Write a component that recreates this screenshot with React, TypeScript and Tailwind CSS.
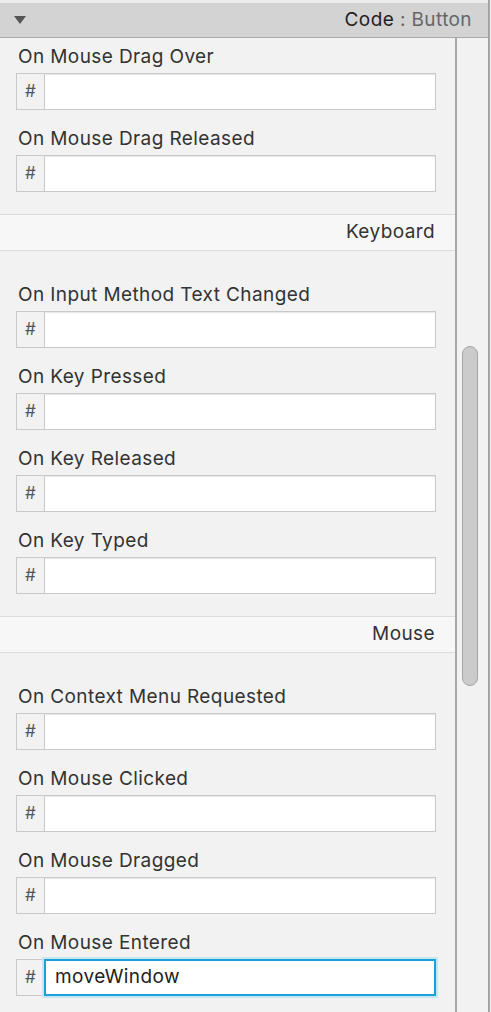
const font = { fontFamily: 'Inter, "Open Sans", "Liberation Sans", sans-serif', letterSpacing: "0.4px" };

type Field = { label: string; value?: string; focused?: boolean };

const groups: { title?: string; fields: Field[] }[] = [
  {
    fields: [{ label: "On Mouse Drag Over" }, { label: "On Mouse Drag Released" }],
  },
  {
    title: "Keyboard",
    fields: [
      { label: "On Input Method Text Changed" },
      { label: "On Key Pressed" },
      { label: "On Key Released" },
      { label: "On Key Typed" },
    ],
  },
  {
    title: "Mouse",
    fields: [
      { label: "On Context Menu Requested" },
      { label: "On Mouse Clicked" },
      { label: "On Mouse Dragged" },
      { label: "On Mouse Entered", value: "moveWindow", focused: true },
    ],
  },
];

const FieldRow = ({ field }: { field: Field }) => {
  return (
    <div className="flex flex-col">
      <div className="h-[23px] pl-[18px] text-[19px] leading-[24px] text-[#333]">{field.label}</div>
      <div className="mt-[5px] ml-[16px] flex h-[37px] w-[420px]">
        <div className="flex w-[28px] items-center justify-center border border-r-0 border-[#c9c9c9] bg-[#f2f2f2] text-[17px] text-[#555]">
          #
        </div>
        {field.focused ? (
          <div className="flex flex-1 items-center border-2 border-[#1ba1d9] bg-white pl-[9px] text-[19px] text-[#222] shadow-[0_0_0_2px_#c6e6f4]">
            {field.value}
          </div>
        ) : (
          <div className="flex-1 border border-[#c9c9c9] bg-white shadow-[inset_0_1px_1px_#e6e6e6]" />
        )}
      </div>
    </div>
  );
};

export default function App() {
  return (
    <div className="flex h-[1012px] w-[491px] overflow-hidden bg-[#f2f2f2]" style={font}>
      <div className="flex w-[488px] flex-col">
        <div className="h-[3px] shrink-0 bg-[#ececec]" />
        <div className="flex h-[35px] shrink-0 items-center justify-between border-b border-[#a9a9a9] bg-[#d3d3d3] pl-[14px] pr-[16px]">
          <svg width="12" height="8" viewBox="0 0 12 8">
            <path d="M0 0 L12 0 L6 8 Z" fill="#555" />
          </svg>
          <div className="text-[19px] text-[#222]">
            Code <span className="text-[#666]">: Button</span>
          </div>
        </div>
        <div className="flex min-h-0 flex-1">
          <div className="w-[457px] shrink-0 border-r-2 border-[#a8a8a8] pt-[7px]">
            {groups.map((g, gi) => (
              <div key={gi}>
                {g.title && (
                  <div className="mb-[32px] flex h-[37px] items-center justify-end border-y border-[#dcdcdc] bg-[#f7f7f7] pr-[20px] text-[19px] text-[#333]">
                    {g.title}
                  </div>
                )}
                <div className="flex flex-col gap-[17px] pb-[22px]">
                  {g.fields.map((f) => (
                    <FieldRow key={f.label} field={f} />
                  ))}
                </div>
              </div>
            ))}
          </div>
          <div className="flex-1 pt-[308px] pl-[5px]">
            <div className="h-[340px] w-[16px] rounded-full border border-[#a6a6a6] bg-[#cbcbcb]" />
          </div>
        </div>
      </div>
      <div className="w-[2px] bg-[#a4a4a4]" />
      <div className="flex-1 bg-[#f2f2f2]" />
    </div>
  );
}
